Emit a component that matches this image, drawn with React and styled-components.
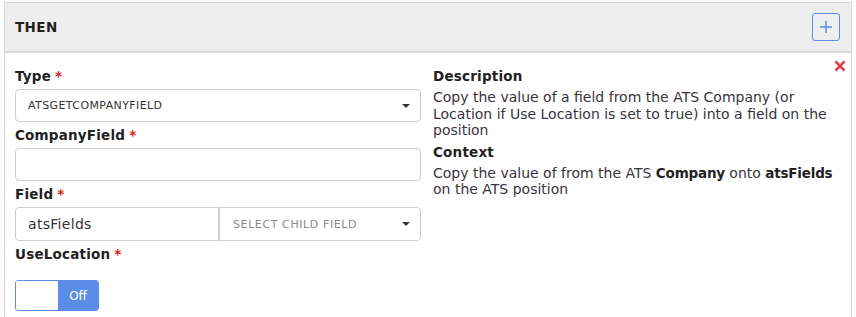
import React from 'react';
import styled, { createGlobalStyle } from 'styled-components';

const GlobalStyle = createGlobalStyle`
  body {
    margin: 0;
    background: #fff;
    font-family: "DejaVu Sans", "Open Sans", sans-serif;
    color: #333;
  }
`;

const Page = styled.div`
  padding: 2px 4px 0 4px;
`;

const Panel = styled.div`
  border: 1px solid #d6d6d6;
  border-bottom: none;
  height: 315px;
  box-sizing: border-box;
`;

const PanelHeader = styled.div`
  height: 48px;
  background: #eeeeee;
  border-bottom: 2px solid #d9d9d9;
  display: flex;
  align-items: center;
  justify-content: space-between;
  padding: 0 11px 0 10px;
`;

const HeaderTitle = styled.span`
  font-size: 13.5px;
  font-weight: 700;
  color: #222;
  letter-spacing: 0.4px;
`;

const AddButton = styled.button`
  width: 28px;
  height: 28px;
  padding: 0;
  border: 1px solid #5b8de8;
  border-radius: 3px;
  background: transparent;
  display: flex;
  align-items: center;
  justify-content: center;
`;

const Body = styled.div`
  position: relative;
  display: grid;
  grid-template-columns: 406px 1fr;
  column-gap: 12px;
  padding: 10px 8px 0 10px;
`;

const RemoveIcon = styled.span`
  position: absolute;
  top: 7px;
  right: 5px;
  width: 12px;
  height: 12px;
  display: flex;
`;

const FormColumn = styled.div`
  display: flex;
  flex-direction: column;
`;

const Label = styled.label`
  font-size: 13.5px;
  font-weight: 700;
  line-height: 20px;
  margin: 3px 0;
  color: #222;
  letter-spacing: 0.2px;
`;

const Required = styled.span`
  color: #e02020;
  margin-left: 4px;
`;

const SelectBox = styled.div`
  height: ${({ tall }) => (tall ? 34 : 33)}px;
  box-sizing: border-box;
  border: 1px solid #cfcfcf;
  border-radius: ${({ radius }) => radius || '4px'};
  display: flex;
  align-items: center;
  justify-content: space-between;
  padding: 0 10px 0 ${({ muted }) => (muted ? 13 : 12)}px;
  font-size: 11px;
  letter-spacing: ${({ muted }) => (muted ? '0.6px' : '0.4px')};
  color: ${({ muted }) => (muted ? '#8a8a8a' : '#333')};
  text-transform: uppercase;
  flex: ${({ grow }) => grow || 'none'};
  min-width: 0;
`;

const TextInput = styled.div`
  height: ${({ tall }) => (tall ? 34 : 33)}px;
  box-sizing: border-box;
  border: 1px solid #cfcfcf;
  border-radius: ${({ radius }) => radius || '4px'};
  display: flex;
  align-items: center;
  padding: 0 12px;
  font-size: 14px;
  letter-spacing: 0.3px;
  color: #333;
  flex: ${({ grow }) => grow || 'none'};
  min-width: 0;
`;

const Caret = styled.span`
  width: 0;
  height: 0;
  border-left: 4px solid transparent;
  border-right: 4px solid transparent;
  border-top: 4px solid #333;
`;

const FieldRow = styled.div`
  display: flex;
`;

const Toggle = styled.div`
  margin-top: 13px;
  width: 84px;
  height: 31px;
  box-sizing: border-box;
  border: 1px solid #5b8de8;
  border-radius: 3px;
  display: flex;
  overflow: hidden;
`;

const ToggleKnob = styled.span`
  width: 42px;
  background: #fff;
`;

const ToggleLabel = styled.span`
  flex: 1;
  background: #5b8de8;
  color: #fff;
  font-size: 12px;
  display: flex;
  align-items: center;
  justify-content: center;
`;

const InfoColumn = styled.div`
  padding-top: 3px;
`;

const InfoTitle = styled.div`
  font-size: 13.5px;
  font-weight: 700;
  line-height: 20px;
  color: #222;
  letter-spacing: 0.2px;
  margin-top: ${({ spaced }) => (spaced ? '3px' : '0')};
`;

const InfoText = styled.p`
  margin: 3px 0 0 0;
  font-size: 14px;
  line-height: 16.5px;
  color: #3a3340;
  b {
    color: #222;
    font-size: 13.5px;
    letter-spacing: -0.2px;
  }
`;

export default function App() {
  return (
    <>
      <GlobalStyle />
      <Page>
        <Panel>
          <PanelHeader>
            <HeaderTitle>THEN</HeaderTitle>
            <AddButton aria-label="Add">
              <svg width="14" height="14" viewBox="0 0 14 14">
                <path d="M7 1v12M1 7h12" stroke="#5b8de8" strokeWidth="1.5" />
              </svg>
            </AddButton>
          </PanelHeader>
          <Body>
            <RemoveIcon>
              <svg width="12" height="12" viewBox="0 0 12 12">
                <path d="M1.5 1.5l9 9M10.5 1.5l-9 9" stroke="#d9434e" strokeWidth="2.6" />
              </svg>
            </RemoveIcon>
            <FormColumn>
              <Label>Type<Required>*</Required></Label>
              <SelectBox>
                <span>ATSGETCOMPANYFIELD</span>
                <Caret />
              </SelectBox>
              <Label>CompanyField<Required>*</Required></Label>
              <TextInput />
              <Label>Field<Required>*</Required></Label>
              <FieldRow>
                <TextInput tall grow="0 0 204px" radius="4px 0 0 4px">atsFields</TextInput>
                <SelectBox tall muted grow="1" radius="0 4px 4px 0">
                  <span>Select child field</span>
                  <Caret />
                </SelectBox>
              </FieldRow>
              <Label>UseLocation<Required>*</Required></Label>
              <Toggle>
                <ToggleKnob />
                <ToggleLabel>Off</ToggleLabel>
              </Toggle>
            </FormColumn>
            <InfoColumn>
              <InfoTitle>Description</InfoTitle>
              <InfoText>
                Copy the value of a field from the ATS Company (or Location if Use Location is set to true) into a field on the position
              </InfoText>
              <InfoTitle spaced>Context</InfoTitle>
              <InfoText>
                Copy the value of from the ATS <b>Company</b> onto <b>atsFields</b> on the ATS position
              </InfoText>
            </InfoColumn>
          </Body>
        </Panel>
      </Page>
    </>
  );
}
